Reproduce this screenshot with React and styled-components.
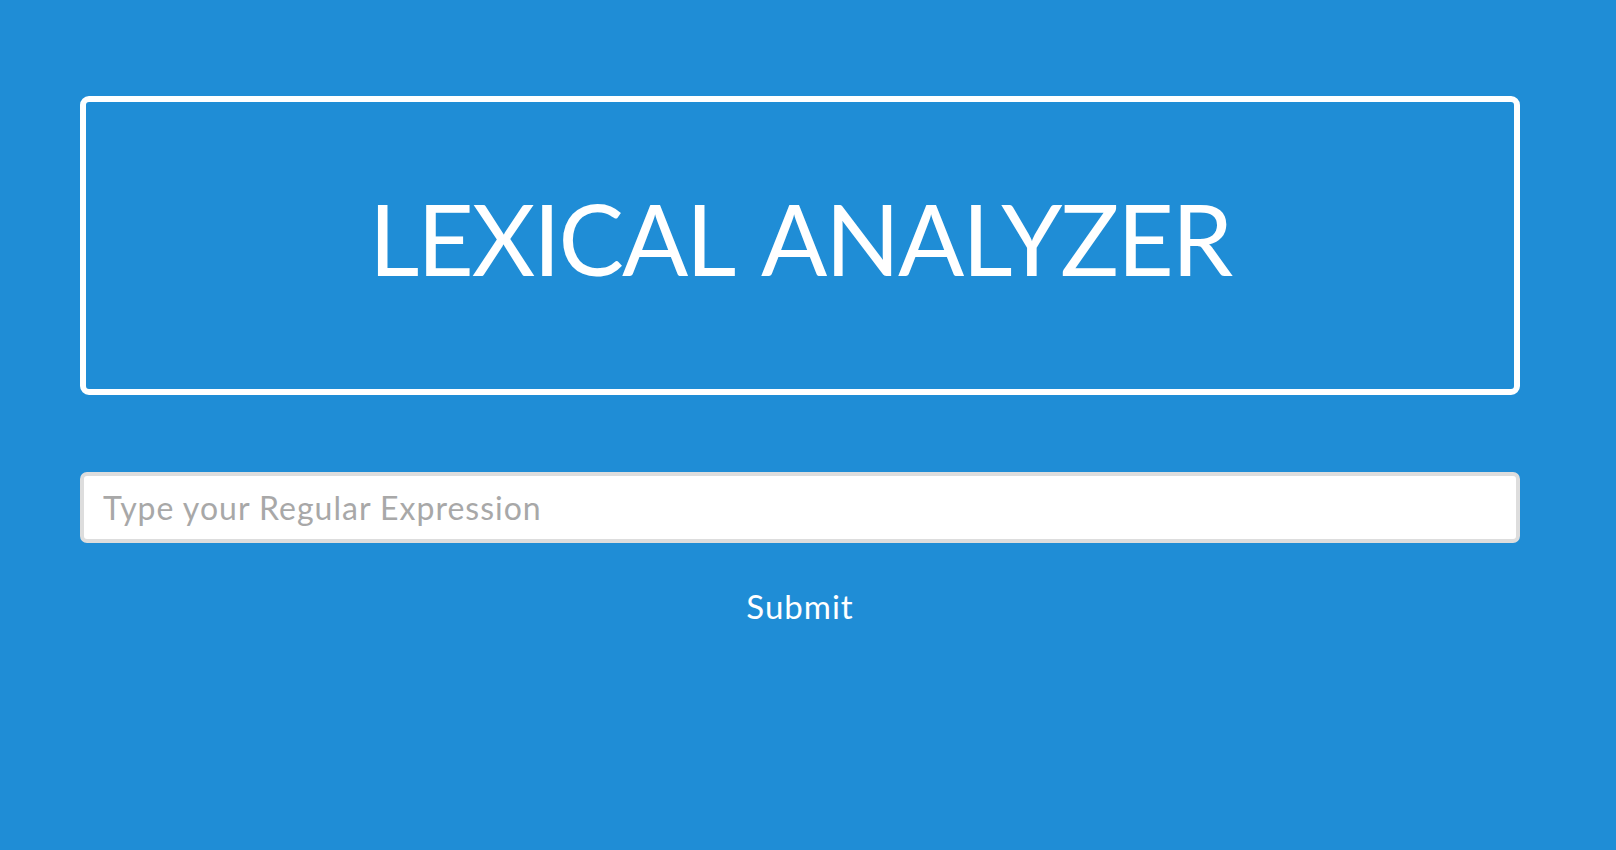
import styled, { createGlobalStyle } from "styled-components"

const GlobalStyle = createGlobalStyle`
  html, body {
    margin: 0;
    padding: 0;
    background: #1f8dd6;
  }
  body {
    font-family: "Lato", "DejaVu Sans", sans-serif;
  }
`

const Page = styled.main`
  box-sizing: border-box;
  min-height: 850px;
  padding: 96px 96px 0 80px;
  display: flex;
  flex-direction: column;
  align-items: stretch;
`

const TitleBox = styled.header`
  box-sizing: border-box;
  width: 1440px;
  height: 299px;
  border: 6px solid #fff;
  border-radius: 9px;
  padding-bottom: 16px;
  display: flex;
  align-items: center;
  justify-content: center;
`

const Title = styled.h1`
  margin: 0;
  color: #fff;
  font-weight: 400;
  font-size: 98px;
  line-height: 1;
  letter-spacing: -2.1px;
  word-spacing: 10px;
`

const Form = styled.form`
  width: 1440px;
  margin-top: 77px;
  display: flex;
  flex-direction: column;
  align-items: center;
  gap: 39px;
`

const Input = styled.input`
  box-sizing: border-box;
  width: 100%;
  height: 71px;
  border: 4px solid #ddd;
  border-radius: 7px;
  padding: 0 19px;
  font-family: inherit;
  font-size: 32px;
  letter-spacing: 1px;
  color: #333;
  background: #fff;
  outline: none;
  &::placeholder {
    color: #a8a8a8;
  }
`

const SubmitButton = styled.button`
  border: none;
  background: transparent;
  color: #fff;
  font-family: inherit;
  font-size: 33px;
  letter-spacing: 1px;
  padding: 4px 10px;
  cursor: pointer;
`

export default function App() {
  return (
    <>
      <GlobalStyle />
      <Page>
        <TitleBox>
          <Title>LEXICAL ANALYZER</Title>
        </TitleBox>
        <Form onSubmit={(e) => e.preventDefault()}>
          <Input type="text" placeholder="Type your Regular Expression" />
          <SubmitButton type="submit">Submit</SubmitButton>
        </Form>
      </Page>
    </>
  )
}
